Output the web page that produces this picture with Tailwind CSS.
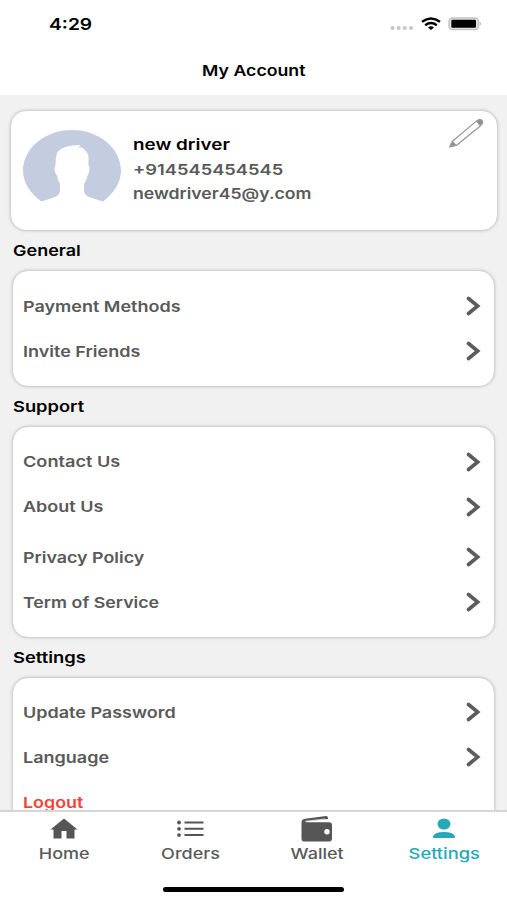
<!DOCTYPE html>
<html lang="en">
<head>
<meta charset="utf-8">
<meta name="viewport" content="width=device-width, initial-scale=1">
<title>My Account</title>
<script src="https://cdn.jsdelivr.net/npm/@tailwindcss/browser@4"></script>
</head>
<body class="w-[507px] h-[900px] overflow-hidden bg-[#f1f1f1] font-['Inter',sans-serif] text-[15px] leading-[20px] font-semibold text-[#595959] flex flex-col">
<svg class="hidden"><symbol id="chev" viewBox="0 0 16 20"><path d="M2.500 2.500 11.700 10 2.500 17.500" fill="none" stroke="#5c5c5c" stroke-width="3.600" stroke-linecap="round"/></symbol></svg>

<header class="h-[95px] shrink-0 bg-white text-black">
  <div class="h-[47px] flex items-center justify-between pl-[49px] pr-[25px]">
    <span class="text-[16px] origin-left scale-x-[1.2]">4:29</span>
    <div class="flex items-center">
      <svg class="w-[24px] h-[6px] mt-[8px]" viewBox="0 0 24 6" fill="#c6c6c6"><circle cx="2.5" cy="3" r="2"/><circle cx="8.7" cy="3" r="2"/><circle cx="14.8" cy="3" r="2"/><circle cx="21" cy="3" r="2"/></svg>
      <svg class="w-[20px] h-[14px] ml-[7px]" viewBox="0 0 20 14" fill="none" stroke="#000" stroke-width="2.400"><path d="M1 4.800Q10-1.700 19 4.800M4.200 8.200Q10 4 15.800 8.200"/><path d="M7 10.400Q10 8.200 13 10.400L10 13Z" fill="#000" stroke="none"/></svg>
      <svg class="w-[34px] h-[14px] ml-[7px]" viewBox="0 0 34 14"><rect x="1" y="1" width="29.500" height="11.500" rx="3.500" fill="#e6e6e6" stroke="#c4c4c4" stroke-width="1.500"/><rect x="3.300" y="2.800" width="24.700" height="8" rx="1.200"/><path d="M31.800 4.800q2.200 2 0 4z" fill="#aaa"/></svg>
    </div>
  </div>
  <div class="h-[47px] flex justify-center pt-[14px]"><h1 class="scale-x-[1.18]">My Account</h1></div>
</header>

<main class="h-[716px] shrink-0 overflow-hidden pt-[15px]">
  <section class="ml-[10px] w-[488px] h-[121px] bg-white rounded-[16px] border border-[#d2d2d2] shadow-[0_0_3px_#c4c4c4] flex">
    <svg class="ml-[12px] mt-[19px] w-[98px] h-[73px] shrink-0" viewBox="0 0 98 73"><path d="M18.500 71.500C8 64 0 53 0 41 0 18 22 0 49 0S98 18 98 41C98 53 90 64 80 71.500Q71 69 64 66 61 64 61 59.500V54Q64 50 64.500 45.500 66.500 43 66.500 37.500L65.500 35V27Q65 22 59 17.500L55.500 17.500 57.500 15Q40 15 34.500 22 32.500 26 32.500 35L31.500 38Q31.500 43 34 45.500 34.500 50 37 54V59.500Q37 64 34 66 27 69 18.500 71.500Z" fill="#c4cce0"/></svg>
    <div class="ml-[12px] pt-[24px] flex flex-col items-start">
      <h2 class="text-black origin-left scale-x-[1.26] h-[25px]">new driver</h2>
      <p class="origin-left scale-x-[1.22] h-[24px]">+914545454545</p>
      <p class="origin-left scale-x-[1.176]">newdriver45@y.com</p>
    </div>
    <svg class="ml-auto mr-[13px] mt-[7px] w-[35px] h-[30px] shrink-0" viewBox="0 0 36 31" fill="none" stroke="#9a9a9a" stroke-width="1.300"><path d="M1 29.500 3.500 24 28 3.500Q31.500.500 34.500 3.500 35 6 32 8.500L8 28Z"/><path d="M3.500 24.500 7 28 1 29.500Z" fill="#8c8c8c"/><path d="M28.500 3.300 32 7.500 34.500 5.500Q35 2 31.500 1.500Z" fill="#8c8c8c"/></svg>
  </section>

  <h2 class="ml-[13px] h-[39px] pt-[10px] text-black"><span class="inline-block origin-left scale-x-[1.2]">General</span></h2>
  <section class="ml-[12px] w-[483px] h-[117px] bg-white rounded-[16px] border border-[#d2d2d2] shadow-[0_0_3px_#c4c4c4] pl-[10px] pr-[12px] pt-[13px]">
    <div class="h-[45px] flex items-center justify-between"><span class="origin-left scale-x-[1.2]">Payment Methods</span><svg class="w-[16px] h-[20px] mb-[2px]"><use href="#chev"/></svg></div>
    <div class="h-[45px] flex items-center justify-between"><span class="origin-left scale-x-[1.2]">Invite Friends</span><svg class="w-[16px] h-[20px] mb-[2px]"><use href="#chev"/></svg></div>
  </section>

  <h2 class="ml-[13px] h-[39px] pt-[10px] text-black"><span class="inline-block origin-left scale-x-[1.22]">Support</span></h2>
  <section class="ml-[12px] w-[483px] h-[212px] bg-white rounded-[16px] border border-[#d2d2d2] shadow-[0_0_3px_#c4c4c4] pl-[10px] pr-[12px] pt-[12px]">
    <div class="h-[45px] flex items-center justify-between"><span class="origin-left scale-x-[1.21]">Contact Us</span><svg class="w-[16px] h-[20px]"><use href="#chev"/></svg></div>
    <div class="h-[45px] flex items-center justify-between"><span class="origin-left scale-x-[1.2]">About Us</span><svg class="w-[16px] h-[20px]"><use href="#chev"/></svg></div>
    <div class="h-[45px] mt-[5px] flex items-center justify-between"><span class="origin-left scale-x-[1.19] pt-[2px]">Privacy Policy</span><svg class="w-[16px] h-[20px]"><use href="#chev"/></svg></div>
    <div class="h-[45px] flex items-center justify-between"><span class="origin-left scale-x-[1.185] pt-[2px]">Term of Service</span><svg class="w-[16px] h-[20px]"><use href="#chev"/></svg></div>
  </section>

  <h2 class="ml-[13px] h-[39px] pt-[10px] text-black"><span class="inline-block origin-left scale-x-[1.225]">Settings</span></h2>
  <section class="ml-[12px] w-[483px] h-[212px] bg-white rounded-[16px] border border-[#d2d2d2] shadow-[0_0_3px_#c4c4c4] pl-[10px] pr-[12px] pt-[12px]">
    <div class="h-[45px] flex items-center justify-between"><span class="origin-left scale-x-[1.2]">Update Password</span><svg class="w-[16px] h-[20px] mb-px"><use href="#chev"/></svg></div>
    <div class="h-[45px] flex items-center justify-between"><span class="origin-left scale-x-[1.2]">Language</span><svg class="w-[16px] h-[20px] mb-px"><use href="#chev"/></svg></div>
    <div class="h-[45px] flex items-center text-[#f04438]"><span class="origin-left scale-x-[1.19]">Logout</span></div>
  </section>
</main>

<footer class="h-[90px] shrink-0 bg-white border-t-2 border-[#d6d6d6] -mt-px relative flex flex-col items-center">
  <nav class="w-full h-[75px] pl-px grid grid-cols-4 font-medium">
    <a class="flex flex-col items-center"><svg class="w-[28px] h-[32px]" viewBox="0 0 28 32"><path d="M14 6.500.5 17.500H3.500V26.500H11.500V19H16.500V26.500H24.500V17.500H27.500Z" fill="#555"/></svg><span class="scale-x-[1.2]">Home</span></a>
    <a class="flex flex-col items-center"><svg class="w-[28px] h-[32px]" viewBox="0 0 28 32" fill="#555" stroke="#555"><path d="M7.500 10.500H26.500M7.500 16.800H26.500M7.500 23.100H26.500" stroke-width="2"/><g stroke="none"><circle cx="2" cy="10.500" r="1.900"/><circle cx="2" cy="16.800" r="1.900"/><circle cx="2" cy="23.100" r="1.900"/></g></svg><span class="scale-x-[1.2]">Orders</span></a>
    <a class="flex flex-col items-center"><svg class="w-[32px] h-[32px]" viewBox="0 0 32 32"><path d="M.5 10Q.5 7.500 4 6.700L25 4Q27 4 27 6V7L6 9.300Q4.500 9.600 5 10.200H28Q31 10.200 31 13V26.500Q31 29.500 28 29.500H3Q.5 29.500.5 26.500Z" fill="#555"/><path d="M4 9.300 24 7" stroke="#fff" stroke-width=".7"/><circle cx="26" cy="19.700" r="2.700" fill="#fff"/></svg><span class="scale-x-[1.2]">Wallet</span></a>
    <a class="flex flex-col items-center text-[#25a9ba]"><svg class="w-[24px] h-[32px]" viewBox="0 0 24 32" fill="#25a9ba"><ellipse cx="12" cy="12" rx="6.500" ry="5.600"/><path d="M2.500 26Q.7 26 .8 24.700 2 20 12 20T23.200 24.700Q23.300 26 21.500 26Z"/></svg><span class="scale-x-[1.22]">Settings</span></a>
  </nav>
  <div class="w-[181px] h-[5px] rounded-full bg-black"></div>
</footer>
</body>
</html>
